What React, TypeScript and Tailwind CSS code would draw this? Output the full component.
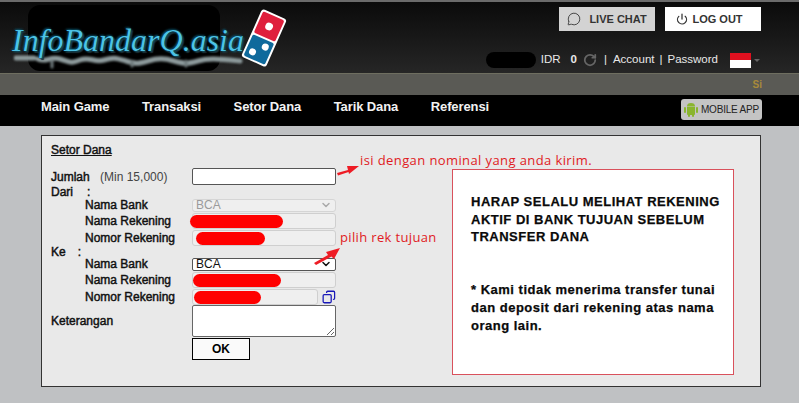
import React from 'react'
import { MessageCircle, Power, RotateCw, Copy, ChevronDown } from 'lucide-react'

const sans = 'font-["Liberation_Sans",Arial,sans-serif]'

function Logo() {
  return (
    <div className="relative w-[290px] h-[70px] shrink-0">
      <div className="absolute left-[28px] top-[3px] w-[192px] h-[66px] rounded-[12px] bg-black" />
      {/* smeared reflection under the wordmark */}
      <svg className="absolute left-[14px] top-[52px] blur-[1px]" width="232" height="16" viewBox="0 0 232 16" fill="none">
        <path d="M2 4h18M24 5c8 4 12-3 22 0s10 5 20 1 14 3 24 0 12-2 22 1 12 3 22 0 16-3 26 0 14 3 24 0 20-2 42 0" stroke="#8d9a9c" strokeWidth="5" strokeLinecap="round" />
        <path d="M38 7v6M118 8v4M172 7v5" stroke="#6f7a7c" strokeWidth="3" strokeLinecap="round" />
      </svg>
      <div className="absolute left-[12px] top-[20px] whitespace-nowrap font-['Liberation_Serif',serif] italic text-[32px] leading-[36px] text-[#4cc3e6] [text-shadow:0_0_1px_#000,1px_1px_2px_#0d5e78,-1px_-1px_2px_#0d5e78,2px_2px_1px_#222]">
        InfoBandarQ.asia
      </div>
      <svg className="absolute left-[241px] top-[7px]" width="46" height="58" viewBox="0 0 46 60">
        <g transform="rotate(24 23 30)">
          <rect x="9" y="3" width="28" height="54" rx="3" fill="#fff" />
          <rect x="11" y="5" width="24" height="24" rx="2" fill="#df1f3c" />
          <rect x="11" y="31" width="24" height="24" rx="2" fill="#0f6a9c" />
          <circle cx="23" cy="17" r="4" fill="#fff" />
          <circle cx="18" cy="48" r="3.6" fill="#fff" />
          <circle cx="28" cy="38" r="3.6" fill="#fff" />
        </g>
      </svg>
    </div>
  )
}

function Header() {
  return (
    <header className="h-[73px] flex justify-between border-t-2 border-[#6b6b6b] bg-gradient-to-b from-[#0b0b0b] to-[#262626]">
      <Logo />
      <div className="flex flex-col items-end">
        <div className="flex gap-[10px] mt-[5px] mr-[38px] text-[11px] font-bold">
          <button className="w-[96px] h-[24px] bg-[#d3d3d3] text-[#333] flex items-center justify-center gap-[8px]">
            <MessageCircle size={14} strokeWidth={1.5} />
            LIVE CHAT
          </button>
          <button className="w-[96px] h-[24px] bg-white text-[#333] flex items-center justify-center gap-[4px] pr-[7px]">
            <Power size={12} strokeWidth={2.5} />
            LOG OUT
          </button>
        </div>
        <div className="flex items-center h-[16px] mt-[21px] mr-[39px] text-[11.5px] text-[#e8e8e8]">
          <span className="w-[50px] h-[16px] rounded-[8px] bg-black mr-[5px]" />
          <span>IDR</span>
          <span className="ml-[10px] font-bold">0</span>
          <RotateCw size={14} strokeWidth={3} className="ml-[6px] text-[#666]" />
          <span className="ml-[7px]">|</span>
          <span className="ml-[6px]">Account</span>
          <span className="ml-[5px]">|</span>
          <span className="ml-[5px]">Password</span>
          <span className="ml-[12px] w-[21px] h-[15px] flex flex-col">
            <span className="h-1/2 bg-[#e0101f]" />
            <span className="h-1/2 bg-white" />
          </span>
          <span className="ml-[3px] mt-[1px] border-x-[3px] border-t-[3px] border-x-transparent border-t-[#666]" />
        </div>
      </div>
    </header>
  )
}

function Nav() {
  const items = ['Main Game', 'Transaksi', 'Setor Dana', 'Tarik Dana', 'Referensi']
  return (
    <nav className="h-[31px] bg-black flex items-center justify-between pl-[41px] pr-[37px]">
      <div className="flex gap-[32.5px] text-[13px] font-bold tracking-[-0.1px] text-[#f2f2f2] -mt-[8px]">
        {items.map(item => <a key={item}>{item}</a>)}
      </div>
      <button className="w-[81px] h-[21px] mt-[-2px] rounded-[3px] bg-[#c4c4c4] flex items-center justify-center gap-[3px] text-[10px] text-[#222] tracking-[-0.2px]">
        <svg width="14" height="15" viewBox="0 0 14 15" fill="#8ab52f">
          <rect x="0" y="5" width="2" height="6" rx="1" />
          <rect x="12" y="5" width="2" height="6" rx="1" />
          <path d="M3 5h8v7a1 1 0 0 1-1 1H4a1 1 0 0 1-1-1z" />
          <rect x="4" y="12" width="2" height="3" rx="1" />
          <rect x="8" y="12" width="2" height="3" rx="1" />
          <path d="M3 4.4a4 3.4 0 0 1 8 0z" />
        </svg>
        MOBILE APP
      </button>
    </nav>
  )
}

function Label({ children, indent }: { children: React.ReactNode; indent?: boolean }) {
  return <div className={`${indent ? 'pl-[34px]' : ''} [-webkit-text-stroke:0.45px_#111] whitespace-nowrap`}>{children}</div>
}

function Redacted({ width, left }: { width: number; left: number }) {
  return (
    <span
      className="absolute top-[1px] h-[13px] rounded-[7px] bg-[#ff0000]"
      style={{ width, left }}
    />
  )
}

function Row({ label, h, children, indent }: { label: React.ReactNode; h: number; children?: React.ReactNode; indent?: boolean }) {
  return (
    <div className="flex items-center" style={{ height: h }}>
      <div className="w-[141px] shrink-0"><Label indent={indent}>{label}</Label></div>
      {children}
    </div>
  )
}

function ReadonlyField({ children, className }: { children?: React.ReactNode; className?: string }) {
  return <div className={`relative h-[16px] rounded-[3px] border border-[#cfcfcf] bg-[#efefef] ${className ?? 'w-[144px]'}`}>{children}</div>
}

function SetorForm() {
  return (
    <div className="w-[285px] shrink-0 text-[12px] leading-[14px] text-[#111]">
      <div className="underline [-webkit-text-stroke:0.45px_#111] h-[15px]">Setor Dana</div>
      <div className="mt-[10px]">
        <Row label={<>Jumlah <span className="[-webkit-text-stroke:0] text-[#444] ml-[7px]">(Min 15,000)</span></>} h={17}>
          <input className="w-[144px] h-[17px] rounded-[2px] border border-[#555] bg-white" />
        </Row>
        <Row label={<>Dari<span className="ml-[14px]">:</span></>} h={13} />
        <Row label="Nama Bank" h={14} indent>
          <div className="w-[144px] h-[13px] rounded-[3px] border border-[#d5d5d5] bg-[#efefef] flex items-center justify-between px-[3px] text-[#9b9b9b]">
            BCA
            <ChevronDown size={12} strokeWidth={3} className="text-[#aaa]" />
          </div>
        </Row>
        <Row label="Nama Rekening" h={17} indent>
          <ReadonlyField><Redacted left={-3} width={93} /></ReadonlyField>
        </Row>
        <Row label="Nomor Rekening" h={17} indent>
          <ReadonlyField><Redacted left={3} width={69} /></ReadonlyField>
        </Row>
        <Row label={<>Ke<span className="ml-[12px]">:</span></>} h={11} />
        <Row label="Nama Bank" h={14} indent>
          <div className="w-[144px] h-[13px] rounded-[2px] border border-[#555] bg-white flex items-center justify-between px-[3px]">
            BCA
            <ChevronDown size={12} strokeWidth={3} className="text-[#111]" />
          </div>
        </Row>
        <Row label="Nama Rekening" h={17} indent>
          <ReadonlyField><Redacted left={0} width={88} /></ReadonlyField>
        </Row>
        <Row label="Nomor Rekening" h={17} indent>
          <ReadonlyField className="w-[128px]"><Redacted left={1} width={67} /></ReadonlyField>
          <Copy size={14} strokeWidth={2.25} className="ml-[4px] text-[#1a1ab8] -scale-x-100" />
        </Row>
        <div className="flex">
          <div className="w-[141px] shrink-0 pt-[9px]"><Label>Keterangan</Label></div>
          <textarea className="w-[144px] h-[32px] rounded-[2px] border border-[#666] bg-white block" />
        </div>
        <div className="flex mt-[1px]">
          <div className="w-[141px] shrink-0" />
          <button className="w-[58px] h-[22px] border border-black bg-[#fafafa] font-bold text-black">OK</button>
        </div>
      </div>
    </div>
  )
}

function Notes() {
  return (
    <div className="w-[282px] h-[206px] mt-[26px] ml-[116px] shrink-0 border border-[#d9515c] bg-white pt-[23px] pl-[18px] text-[13px] leading-[17.7px] font-bold text-[#0a0a0a] [font-family:Arial,'Liberation_Sans',sans-serif] tracking-[0.5px] [-webkit-text-stroke:0.25px_#0a0a0a]">
      <p>HARAP SELALU MELIHAT REKENING<br />AKTIF DI BANK TUJUAN SEBELUM<br />TRANSFER DANA</p>
      <p className="mt-[35px]">* Kami tidak menerima transfer tunai<br />dan deposit dari rekening atas nama<br />orang lain.</p>
    </div>
  )
}

function Annotations() {
  return (
    <>
      <span className="absolute left-[318px] top-[15px] font-['Open_Sans',sans-serif] text-[13px] leading-[18px] text-[#e01b24] tracking-[0.4px] whitespace-nowrap">isi dengan nominal yang anda kirim.</span>
      <span className="absolute left-[298px] top-[92px] font-['Open_Sans',sans-serif] text-[13px] leading-[18px] text-[#e01b24] tracking-[0.35px] whitespace-nowrap">pilih rek tujuan</span>
      <svg className="absolute left-[294px] top-[27px]" width="24" height="14" viewBox="0 0 24 14">
        <path d="M1 10 L12 7 L11 3 L23 3 L13 11 L12.5 9 L2 12.5 Z" fill="#ee1c25" />
      </svg>
      <svg className="absolute left-[272px] top-[107px]" width="28" height="24" viewBox="0 0 28 24">
        <path d="M0 20 L14 12 L12 9 L26 5 L20 16 L17.5 13.5 L2 22 Z" fill="#ee1c25" />
      </svg>
    </>
  )
}

export default function App() {
  return (
    <div className={`w-[799px] h-[403px] overflow-hidden bg-[#bfc1c3] ${sans}`}>
      <Header />
      <div className="h-[22px] bg-[#5a5a55] border-t border-[#6e6e60] flex justify-end items-center pr-[37px] text-[10px] font-bold text-[#a88a3a] overflow-hidden">
        Si
      </div>
      <Nav />
      <div className="pt-[9px] pl-[41px]">
        <main className="relative w-[720px] h-[252px] border border-[#333] bg-[#e9e9e9] pt-[7px] pl-[9px] flex">
          <SetorForm />
          <Notes />
          <Annotations />
        </main>
      </div>
    </div>
  )
}
